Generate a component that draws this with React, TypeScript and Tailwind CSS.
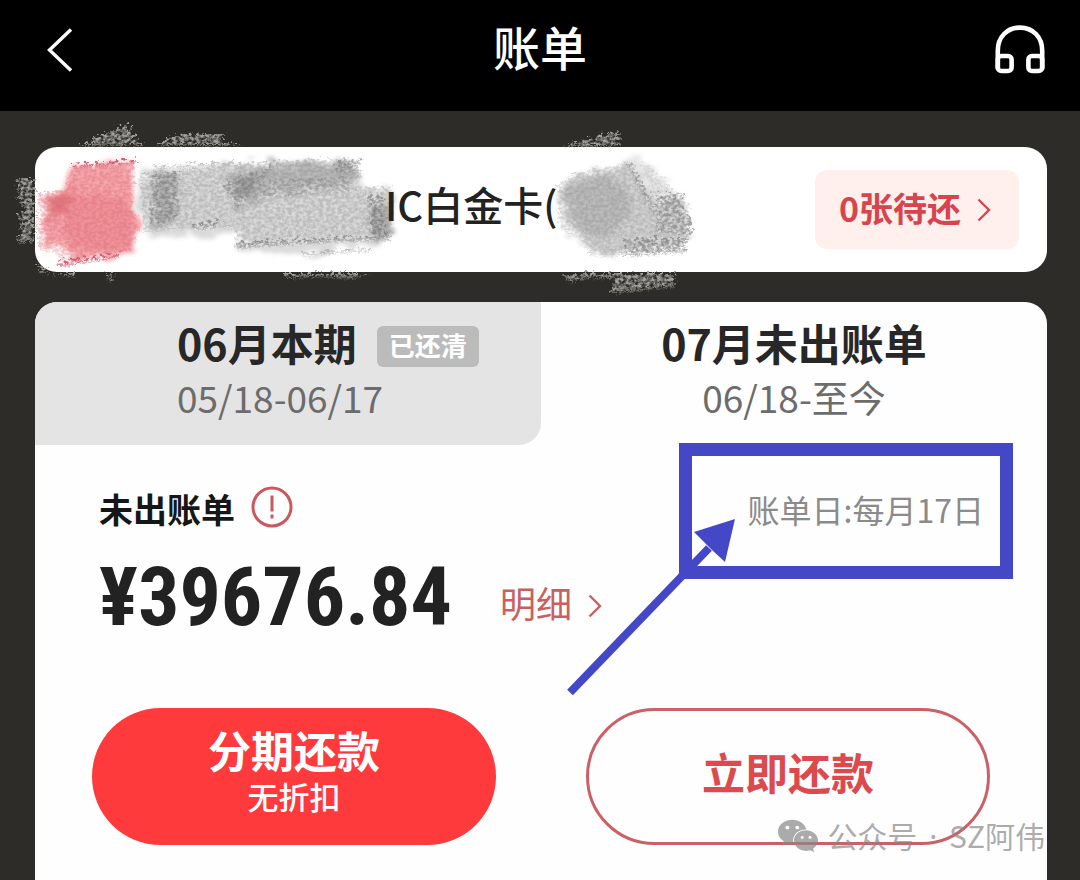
import type { ReactNode } from "react";
import { FaWeixin } from "react-icons/fa6";

type Tab = {
  title: string;
  range: string;
  badge?: string;
};

const currentTab: Tab = { title: "06月本期", range: "05/18-06/17", badge: "已还清" };
const nextTab: Tab = { title: "07月未出账单", range: "06/18-至今" };

function Chevron({ className }: { className?: string }) {
  return (
    <svg viewBox="0 0 14 24" fill="none" stroke="currentColor" aria-hidden="true" className={className}>
      <path d="M1.5 1.5 12 12 1.5 22.5" strokeWidth="2.4" />
    </svg>
  );
}

function Headphones() {
  return (
    <svg viewBox="0 0 50 50" fill="none" stroke="currentColor" strokeWidth="4.6" className="h-[50px] w-[50px]" aria-hidden="true">
      <path d="M2.8 44V25.5C2.8 12 12 2.6 25 2.6S47.2 12 47.2 25.5V44" />
      <rect x="2.8" y="31" width="13.8" height="15" rx="3.5" />
      <rect x="33.4" y="31" width="13.8" height="15" rx="3.5" />
    </svg>
  );
}

// Pencil scribbles hiding the bank logo, card prefix and card number.
function Scribbles() {
  return (
    <svg viewBox="0 0 720 190" className="pointer-events-none absolute -top-9 -left-[35px] h-[190px] w-[720px]" aria-hidden="true">
      <defs>
        <filter id="pencil" x="-5%" y="-10%" width="110%" height="120%">
          <feTurbulence type="fractalNoise" baseFrequency="0.26 0.34" numOctaves="3" seed="7" result="grain" />
          <feColorMatrix in="grain" type="matrix" values="0 0 0 0 0  0 0 0 0 0  0 0 0 0 0  0 2.6 0 0 -0.75" result="holes" />
          <feDisplacementMap in="SourceGraphic" in2="grain" scale="14" xChannelSelector="R" yChannelSelector="G" result="rough" />
          <feComposite in="rough" in2="holes" operator="in" result="drawn" />
          <feGaussianBlur in="drawn" stdDeviation="0.5" />
        </filter>
        <filter id="smudge" x="-5%" y="-10%" width="110%" height="120%">
          <feTurbulence type="fractalNoise" baseFrequency="0.06 0.14" numOctaves="3" seed="3" result="grain" />
          <feDisplacementMap in="SourceGraphic" in2="grain" scale="24" xChannelSelector="R" yChannelSelector="G" result="rough" />
          <feGaussianBlur in="rough" stdDeviation="2" />
        </filter>
      </defs>

      {/* light marks on the dark page */}
      <g filter="url(#pencil)" fill="#a3a29d">
        <path d="M78 35 128 13 132 24 143 35z" />
        <path d="M156 35 176 24 221 23 222 31 244 35z" />
        <path d="M17 68H34V132H18L22 112 17 106 25 98 18 88z" />
        <path d="M36 152 52 163H74L76 167 66 165 40 162zM104 163H114L110 172z" />
        <path d="M283 163H370L352 168 316 166 287 168z" />
        <path d="M561 36 618 20 620 31 617 36z" />
        <path d="M563 163H676L674 172 676 176 611 183 614 168 590 167 570 172z" />
      </g>

      {/* bank logo */}
      <g filter="url(#smudge)">
        <path d="M74 54 134 50 132 80 139 120 129 143 76 150 62 136 42 134 44 86 62 78z" fill="#f6a8ac" />
        <path d="M66 80 132 90 134 136 76 142 64 120z" fill="#ee8c94" opacity=".7" />
        <path d="M46 96 68 80 70 106 62 104 48 110z" fill="#db6b73" opacity=".8" />
      </g>
      <g filter="url(#pencil)">
        <path d="M72 55 137 49 134 55 132 92 138 122 128 142 60 154 58 144 38 138V84L66 78z" fill="#d96570" opacity=".4" />
        <path d="M72 55 137 49 136 54 73 58zM57 151 120 143 119 147 58 157z" fill="#cc5f73" />
      </g>

      {/* card prefix */}
      <g filter="url(#smudge)">
        <path d="M148 58 232 53 360 50 358 76 392 80 389 128 354 136 300 144 236 136 238 120 200 126 144 124 137 84z" fill="#dadada" />
        <path d="M152 64 178 62 174 112 156 114z" fill="#a8a8a8" opacity=".75" />
        <path d="M220 64 262 54 352 52 356 70 240 84z" fill="#acacac" opacity=".7" />
        <path d="M234 70 258 62 254 92 236 96zM368 98 391 92V128L370 126z" fill="#969696" opacity=".6" />
      </g>
      <g filter="url(#pencil)" fill="#777">
        <path d="M140 64 178 60 234 54 282 50 360 48 362 66 352 74 392 78 391 126 320 132 238 138 234 118 192 118 144 122z" opacity=".3" />
        <path d="M152 64 178 62 176 110 150 116zM222 76 282 50 258 72 240 100zM334 52 360 48 358 62 338 64z" opacity=".5" />
        <path d="M194 114 218 110 217 117 192 119zM234 132 390 125V130L320 132 236 138zM368 86H384V126H370z" opacity=".6" />
        <path d="M262 72 350 66 348 82 254 90z" opacity=".3" />
        <path d="M148 56 232 51 234 55 160 58zM300 142 370 137V141L302 146z" opacity=".4" />
      </g>

      {/* card number */}
      <g filter="url(#smudge)">
        <path d="M560 76 574 62 620 58 632 48 656 84 682 88 690 118 680 132 630 144 592 142 580 126 564 114z" fill="#d3d3d3" />
        <path d="M564 78 610 62 632 94 624 114 600 128 576 112z" fill="#b8b8b8" opacity=".8" />
        <path d="M626 44 640 46 682 86 656 92z" fill="#e6e6e6" />
      </g>
      <g filter="url(#pencil)" fill="#777">
        <path d="M558 76 574 62 626 52 652 86 684 84 688 98 692 112 686 140 626 146 590 146 580 128 558 118z" opacity=".28" />
        <path d="M626 52 632 52 658 106 652 104zM656 84 684 82 682 94 692 110V126L656 122z" opacity=".5" />
        <path d="M624 128 688 128 686 142 624 146z" opacity=".6" />
        <path d="M640 52 652 56 682 92 658 96z" opacity=".2" />
      </g>
    </svg>
  );
}

function TabText({ tab, className }: { tab: Tab; className: string }) {
  return (
    <button type="button" role="tab" className={`flex h-[143px] flex-col pt-5 ${className}`}>
      <span className="flex items-center gap-5">
        <span className="pb-2 text-[43px] leading-10 font-bold text-[#272727]">{tab.title}</span>
        {tab.badge && (
          <span className="rounded-md bg-[#bcbbbc] px-3 pb-1 text-[26px] leading-[37px] font-bold text-white">{tab.badge}</span>
        )}
      </span>
      <span className="text-[37px] leading-[54px] text-[#6c6c6c]">{tab.range}</span>
    </button>
  );
}

// Hand-drawn annotation: frame round the statement date with an arrow into it.
function DateCallout({ children }: { children: ReactNode }) {
  return (
    <div className="relative -mt-0.5 flex h-[136px] items-center border-[13px] border-[#4448c7] pr-4 pb-1 pl-14">
      {children}
      <svg viewBox="0 0 170 180" className="pointer-events-none absolute top-[61px] -left-[125px] h-[180px] w-[170px]" aria-hidden="true">
        <path d="M3 175.500 142 31" stroke="#4448c7" strokeWidth="8" />
        <path d="M168 2 127 15 140 28 145 33 158 45z" fill="#4448c7" />
      </svg>
    </div>
  );
}

export default function App() {
  return (
    <div className="flex min-h-screen flex-col bg-[#2d2c28] font-['Noto_Sans_CJK_SC',sans-serif]">
      <header className="flex h-[111px] items-center justify-between bg-black pr-[35px] pb-3 pl-[47px] text-white">
        <button type="button" aria-label="返回" className="w-[38px]">
          <svg viewBox="0 0 26 44" fill="none" stroke="currentColor" className="h-11 w-[26px]" aria-hidden="true">
            <path d="M24 1.500 2.500 22 24 42.500" strokeWidth="3.4" />
          </svg>
        </button>
        <h1 className="pb-2 text-[47px] leading-[56px] font-medium">账单</h1>
        <button type="button" aria-label="客服">
          <Headphones />
        </button>
      </header>

      <main className="flex flex-1 flex-col gap-[30px] pt-9 pr-[33px] pl-[35px]">
        <section className="relative flex h-[125px] items-center justify-between rounded-[22px] bg-white pr-7 pl-[350px]">
          <Scribbles />
          <h2 className="relative pb-3 text-[40px] leading-[48px] font-medium text-[#222]">IC白金卡(</h2>
          <button
            type="button"
            className="relative flex h-[79px] items-center gap-4 rounded-xl bg-[#fff0ee] pr-7 pl-6 text-[34px] font-bold text-[#d8444d]"
          >
            <span className="pb-1">0张待还</span>
            <Chevron className="h-6 w-[14px]" />
          </button>
        </section>

        <section className="flex-1 rounded-t-[22px] bg-[#fefefe]">
          <div role="tablist" className="grid grid-cols-2">
            <TabText tab={currentTab} className="items-start rounded-tl-[22px] rounded-br-[22px] bg-[#e5e4e5] pl-[142px]" />
            <TabText tab={nextTab} className="items-center" />
          </div>

          <div className="flex items-start justify-between pr-[34px] pl-16">
            <div className="pt-9">
              <div className="flex items-center gap-4">
                <h3 className="text-[34px] leading-[56px] font-bold text-[#161616]">未出账单</h3>
                <button type="button" aria-label="说明" className="pb-1 text-[#c9585f]">
                  <svg viewBox="0 0 42 42" fill="none" stroke="currentColor" strokeWidth="3" className="h-[42px] w-[42px]" aria-hidden="true">
                    <circle cx="21" cy="21" r="19" />
                    <path d="M21 9.500v16M21 28.500v4" />
                  </svg>
                </button>
              </div>
              <div className="flex items-end gap-12 pt-4">
                <p className="font-['Roboto_Condensed',Roboto,sans-serif] text-[82px] leading-[88px] font-bold text-[#222]">¥39676.84</p>
                <a href="#detail" className="flex items-center gap-4 pb-3 text-[36px] leading-[54px] text-[#c96060]">
                  明细
                  <Chevron className="mt-2 h-6 w-[14px]" />
                </a>
              </div>
            </div>
            <DateCallout>
              <span className="text-[32px] leading-10 text-[#8b8b8b]">账单日:每月17日</span>
            </DateCallout>
          </div>

          <div className="relative grid grid-cols-2 gap-[90px] px-[57px] pt-[67px] pb-9">
            <button type="button" className="flex h-[137px] flex-col items-center justify-center rounded-full bg-[#fe3a3d] pb-3 text-white">
              <span className="text-[43px] leading-[50px] font-bold">分期还款</span>
              <span className="text-[31px] leading-[44px] font-medium">无折扣</span>
            </button>
            <button
              type="button"
              className="h-[137px] rounded-full border-3 border-[#cb6167] pb-3 text-[43px] leading-[50px] font-bold text-[#dc4a4e]"
            >
              立即还款
            </button>
            <div className="pointer-events-none absolute right-[2px] bottom-6 flex items-center gap-2 text-[#888]/70">
              <FaWeixin className="h-[42px] w-[42px]" aria-hidden="true" />
              <span className="text-[30px] leading-10">
                公众号<span className="mx-1 font-['Noto_Sans',sans-serif]"> · </span>SZ阿伟
              </span>
            </div>
          </div>
        </section>
      </main>
    </div>
  );
}
